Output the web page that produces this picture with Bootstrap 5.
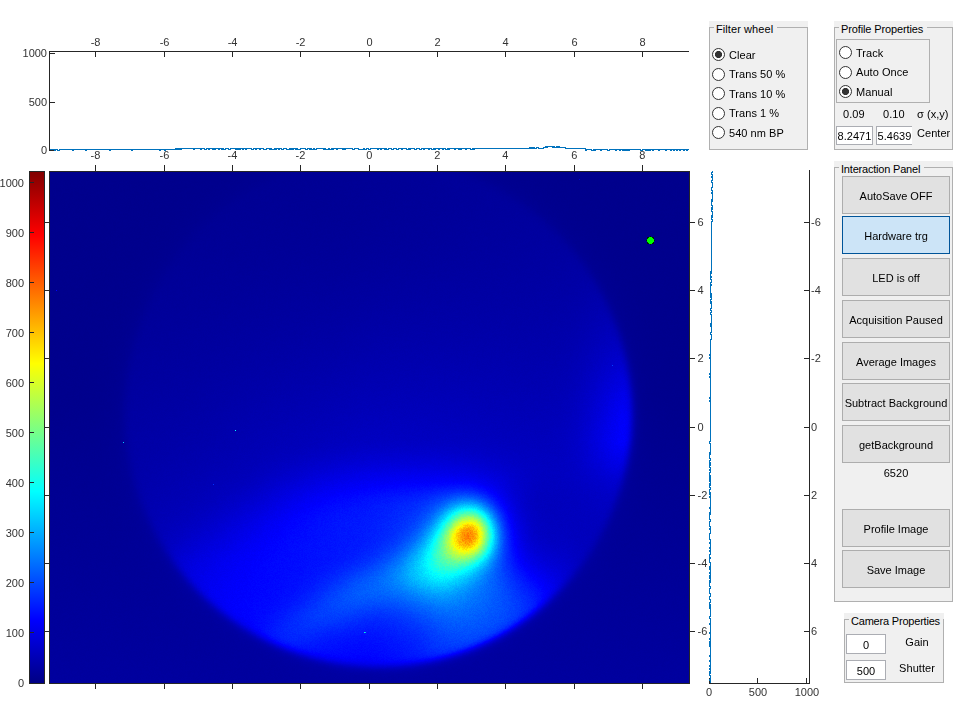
<!DOCTYPE html>
<html lang="en">
<head>
<meta charset="utf-8">
<title>Beam profiler</title>
<link href="https://cdn.jsdelivr.net/npm/bootstrap@5.3.0/dist/css/bootstrap.min.css" rel="stylesheet">
<style>
body{width:965px;height:712px;overflow:hidden;background:#fff;color:#000;font:11px/14px "Liberation Sans",Arial,sans-serif}
.plots{width:709px;height:712px;grid-template-columns:709px}
.plots>*{grid-area:1/1}
.plots canvas{margin:172px 0 0 50px;width:639px;height:511px;display:block}
svg{display:block;overflow:visible;shape-rendering:crispEdges}
svg text{font:11px "Liberation Sans",Arial,sans-serif;fill:#333}
.axis{stroke:#262626;fill:none;stroke-width:1}
.trace{stroke:#0072bd;fill:none;stroke-width:1}
.mid-col{width:125px;padding-top:21px}
.side-col{width:131px;padding-top:21px}
.group-box{background:#f0f0f0;padding-top:6px;letter-spacing:.05px}
.group-box>fieldset{border:1px solid #b0b0b0;height:100%;position:relative}
.group-box>fieldset>legend{position:absolute;top:-6px;left:4px;width:auto;margin:0;padding:0 4px 0 2px;background:#f0f0f0;font-size:11px;line-height:14px;letter-spacing:-.12px;white-space:nowrap;float:none}
.w-filter{width:99px;height:129px}.w-profile{width:119px;height:129px}.w-inter{width:119px;height:441px}.w-cam{width:100px;height:70px;margin:11px 0 0 10px}
.w-filter legend{letter-spacing:.08px!important}
.w-inter legend{letter-spacing:-.2px!important}
.w-cam legend{letter-spacing:-.2px!important;padding-right:3px!important}
.opts{padding:17px 0 0 2px}
.opt{height:19.5px;font-size:11px;white-space:nowrap}
.opt input{appearance:none;width:13px;height:13px;margin:0 4px 0 0;border:1px solid #333;border-radius:50%;background:#fff;flex:none}
.opt input:checked{background:radial-gradient(circle,#333 0 3.2px,#fff 3.9px)}
.track-box{border:1px solid #b0b0b0;width:94px;height:64px;margin:11px 0 0 1px;padding:3px 0 0 2px}
.sig{margin-top:4px;padding-left:8px}
.sig span{white-space:nowrap}.sig span:nth-child(1){width:40px}.sig span:nth-child(2){width:34px}
.cen{margin-top:5px;padding-left:1px}
.cen .num{width:37px;flex:none;margin-right:3px}
.cen .cut{width:36px;border-right:0;margin-right:5px;overflow:hidden}
.mt-inter{margin-top:11px}
.cmds{padding:8px 0 0 7px}
.cmd{width:108px;height:38px;border:1px solid #adadad;border-radius:0;background:#e1e1e1;font-size:11px;line-height:14px;letter-spacing:0;padding:2px 0 0;color:#000;white-space:nowrap}
.cmd.on{background:#cce4f7;border-color:#005499}
.cmd+.cmd{margin-top:4px}.cmd:nth-child(2){margin-top:2px!important}.cmd:nth-child(6){margin-top:3px}
.count{width:108px;margin:3px 0 29px}.cmd:last-child{margin-top:3px!important}
.num{border:1px solid #abadb3;border-radius:0;background:#fff;padding:2px 0 0;height:19px;text-align:center}
.cam{padding:14px 0 0 1px}
.cam .num{width:40px;height:20px;padding-top:3px;flex:none}
.cam span{width:60px;text-align:center;margin:1px 0 0 0;padding-left:2px;flex:none}
.cam2{padding-top:6px}
</style>
<script src="https://cdn.jsdelivr.net/npm/bootstrap@5.3.0/dist/js/bootstrap.bundle.min.js"></script>
</head>
<body>
<div class="d-flex align-items-start">
  <main class="plots d-grid flex-shrink-0">
    <canvas id="beam" width="639" height="511"></canvas>
    <svg id="axes" width="709" height="712">
      <defs><linearGradient id="jet" x1="0" y1="1" x2="0" y2="0">
        <stop offset="0" stop-color="#000083"/><stop offset=".125" stop-color="#00f"/><stop offset=".375" stop-color="#0ff"/><stop offset=".625" stop-color="#ff0"/><stop offset=".875" stop-color="#f00"/><stop offset="1" stop-color="#800000"/>
      </linearGradient></defs>
      <rect x="29.5" y="171.5" width="15" height="512" fill="url(#jet)" stroke="#262626"/>
      <path class="axis" d="M49.5 151V51.5H689M50 53.5h5M50 102.5h5M50 150.5h5M49.5 171.5H689.5V683.5H49.5Z"/>
      <circle cx="650.5" cy="240.5" r="4.1" fill="#020"/>
      <circle cx="650.5" cy="240.5" r="3.3" fill="#0f0"/>
    </svg>
  </main>
  <div class="mid-col flex-shrink-0">
    <section class="group-box w-filter"><fieldset>
      <legend>Filter wheel</legend>
      <div class="opts">
        <label class="opt d-flex align-items-center"><input type="radio" name="f" checked>Clear</label>
        <label class="opt d-flex align-items-center"><input type="radio" name="f">Trans 50 %</label>
        <label class="opt d-flex align-items-center"><input type="radio" name="f">Trans 10 %</label>
        <label class="opt d-flex align-items-center"><input type="radio" name="f">Trans 1 %</label>
        <label class="opt d-flex align-items-center"><input type="radio" name="f">540 nm BP</label>
      </div>
    </fieldset></section>
    <svg id="vprof" width="125" height="562" viewBox="709 150 125 562">
      <path class="axis" d="M809.5 170V683.5H709M709.5 683v-5M757.5 683v-5M806.5 683v-5"/>
      <text x="709" y="696" text-anchor="middle">0</text><text x="758" y="696" text-anchor="middle">500</text><text x="807" y="696" text-anchor="middle">1000</text>
    </svg>
  </div>
  <aside class="side-col flex-shrink-0">
    <section class="group-box w-profile"><fieldset>
      <legend>Profile Properties</legend>
      <div class="track-box">
        <label class="opt d-flex align-items-center"><input type="radio" name="p">Track</label>
        <label class="opt d-flex align-items-center"><input type="radio" name="p">Auto Once</label>
        <label class="opt d-flex align-items-center"><input type="radio" name="p" checked>Manual</label>
      </div>
      <div class="d-flex sig"><span>0.09</span><span>0.10</span><span>σ (x,y)</span></div>
      <div class="d-flex cen"><div class="num">8.2471</div><div class="num cut">5.4639</div><span>Center</span></div>
    </fieldset></section>
    <section class="group-box w-inter mt-inter"><fieldset>
      <legend>Interaction Panel</legend>
      <div class="cmds d-flex flex-column">
        <button class="btn cmd">AutoSave OFF</button>
        <button class="btn cmd on">Hardware trg</button>
        <button class="btn cmd">LED is off</button>
        <button class="btn cmd">Acquisition Paused</button>
        <button class="btn cmd">Average Images</button>
        <button class="btn cmd">Subtract Background</button>
        <button class="btn cmd">getBackground</button>
        <div class="count text-center">6520</div>
        <button class="btn cmd">Profile Image</button>
        <button class="btn cmd">Save Image</button>
      </div>
    </fieldset></section>
    <section class="group-box w-cam"><fieldset>
      <legend>Camera Properties</legend>
      <div class="d-flex cam"><div class="num">0</div><span>Gain</span></div>
      <div class="d-flex cam cam2"><div class="num">500</div><span>Shutter</span></div>
    </fieldset></section>
  </aside>
</div>
<script>
const NS='http://www.w3.org/2000/svg';
function add(p,t,a,s){const e=document.createElementNS(NS,t);for(const k in a)e.setAttribute(k,a[k]);if(s!==undefined)e.textContent=s;p.append(e)}
let seed=7;function rnd(){seed=(seed*1664525+1013904223)>>>0;return seed/4294967296}
const ax=document.getElementById('axes'),vp=document.getElementById('vprof');
let d='';
[95,164,232,300,369,437,505,574,642].forEach((x,i)=>{
  const v=-8+2*i;d+=`M${x+.5} 52v5M${x+.5} 165v6M${x+.5} 684v5`;
  add(ax,'text',{x:x+.6,y:46,'text-anchor':'middle'},v);add(ax,'text',{x:x+.4,y:159,'text-anchor':'middle'},v)});
let dv='';
[222,290,358,427,495,563,631].forEach((y,i)=>{
  const v=6-2*i;d+=`M45 ${y+.5}h4M690 ${y+.5}h5`;dv+=`M804 ${y+.5}h5`;
  add(ax,'text',{x:697.5,y:y+4},v);add(vp,'text',{x:811,y:y+4},-v)});
for(let i=0;i<=10;i++){const y=i?682-50*i:683;d+=`M30 ${y+.5}h4`;add(ax,'text',{x:24,y:i?y+5:687,'text-anchor':'end'},i*100)}
[[57,1000],[106,500],[154,0]].forEach(([y,v])=>add(ax,'text',{x:47,y,'text-anchor':'end'},v));
add(ax,'path',{d,class:'axis'});add(vp,'path',{d:dv,class:'axis'});
/* profile traces, one sample per pixel, drawn as steps */
let t='M50 149.5';
for(let x=50;x<689;x++){let b=149.5,n=rnd();
  if(x<175)b+=n<.1?1:0;else if(x<480)b-=n<(x<200?.85:.6)?1:0;else if(x<525)b-=1;else if(x<543)b-=n<.4?2:1;else if(x<560)b-=n<.3?3:2;else if(x<565)b-=2;else if(x<585)b-=1;else b+=n<.2?1:0;
  t+=`V${b}H${x+1}`}
add(ax,'path',{d:t,class:'trace'});
t='M711.5 171';
for(let y=171;y<683;y++){let b,n=rnd();
  if(y<225)b=n<.5?712.5:711.5;else if(y<270)b=711.5;else if(y<340)b=n<.5?710.5:711.5;else if(y<450)b=n<.04?709.5:710.5;else if(y<610)b=n<.45?709.5:710.5;else b=n<.15?709.5:710.5;
  t+=`H${b}V${y+1}`}
add(vp,'path',{d:t,class:'trace'});

/* beam image: intensity 0..1023 mapped through the jet colours */
const G=[
[38,40,44,50,55,60,65,66,65,62,60,65,95,125],
[40,43,48,54,64,75,84,86,84,74,65,66,88,100],
[42,47,53,62,82,102,114,120,118,92,68,65,74,80],
[45,51,60,78,106,130,145,160,170,110,66,62,66,70],
[48,56,72,98,126,145,155,175,200,135,72,62,62,62],
[50,64,88,114,135,146,155,180,230,170,82,64,60,60],
[54,78,104,124,138,146,156,195,245,198,104,72,60,60],
[60,90,112,128,138,148,165,210,258,220,138,84,62,60],
[66,98,118,130,138,150,168,202,245,222,164,98,70,60],
[70,104,122,130,142,152,156,180,220,210,172,125,80,60],
[70,105,124,130,142,142,142,160,195,194,165,120,80,60],
[70,100,120,130,136,134,132,150,175,174,148,110,70,60],
[60,90,100,120,126,126,128,140,155,150,130,100,60,60]];
function cr(a,b,c,e,f){return b+.5*f*(c-a+f*(2*a-5*b+4*c-e+f*(3*(b-c)+e-a)))}
function g(r,c){return G[Math.max(0,Math.min(12,r))][Math.max(0,Math.min(13,c))]}
function field(x,y){const u=(x-130)/40,v=Math.max(0,(y-440)/20),c=Math.floor(u),r=Math.floor(v),a=[];
  for(let k=-1;k<3;k++)a.push(cr(g(r+k,c-1),g(r+k,c),g(r+k,c+1),g(r+k,c+2),u-c));
  let z=cr(...a,v-r);
  if(y<440){const s=Math.max(0,(y-190)/250),top=21+13*Math.max(0,(x-330)/300);z=top+(z-top)*s**1.7}
  return z}
function gs(x,y,cx,cy,sa,sb,th){const c=Math.cos(th),s=Math.sin(th),X=x-cx,Y=y-cy,p=(X*c+Y*s)/sa,q=(-X*s+Y*c)/sb;return Math.exp(-(p*p+q*q)/2)}
const cv=document.getElementById('beam').getContext('2d'),im=cv.createImageData(639,511);
for(let j=0;j<511;j++)for(let i=0;i<639;i++){
  const x=i+50,y=j+172,r=Math.hypot(x-378,y-413);
  let z=field(x,y);
  z+=32*gs(x,y,638,418,30,42,0);
  z+=415*gs(x,y,471,533,x>471?15.5:17,18,0)+200*gs(x,y,452,549,31,19,-.85);
  const yc=558+(430-x)*.46+Math.max(0,330-x)*.12;
  if(x<450)z+=(x>250?Math.min(58,(x-240)*.5):0)*Math.exp(-((y-yc)**2)/(2*19*19))*Math.min(1,(450-x)/40);
  const out=13+18*Math.max(0,(y-400)/283)+7*Math.exp(-Math.max(0,r-254)/14);
  const m=1/(1+Math.exp((r-253)/2.4));
  z=out+(z-out)*m;z+=(rnd()-.5)*(2+z*.06);
  const w=z/256,k=(j*639+i)*4,q=n=>Math.max(0,Math.min(255,n*255));
  im.data[k]=q(Math.min(w-1.5,4.5-w));im.data[k+1]=q(Math.min(w-.5,3.5-w));im.data[k+2]=q(Math.min(w+.5,2.5-w));im.data[k+3]=255}
cv.putImageData(im,0,0);
/* hot pixels */
[[73,270,'#00c8ff'],[185,258,'#0ff'],[314,460,'#00ffd0'],[315,460,'#00b0ff'],[562,193,'#0040ff'],[529,7,'#0000d0'],[6,118,'#00f'],[163,312,'#0030ff']].forEach(([x,y,c])=>{cv.fillStyle=c;cv.fillRect(x,y,1,1)});
</script>
</body>
</html>
